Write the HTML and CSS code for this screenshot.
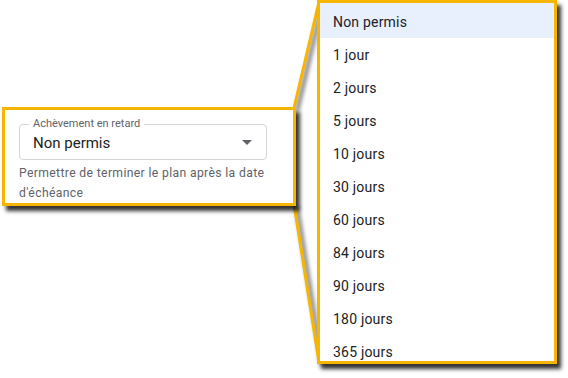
FILE: index.html
```html
<!DOCTYPE html>
<html lang="fr">

<head>
  <meta charset="UTF-8">
  <title>Achèvement en retard</title>
  <link rel="stylesheet" href="styles.css">
</head>

<body>
  <div class="canvas">
    <!-- traits de liaison entre la zone et le zoom -->
    <svg class="links" width="568" height="378" viewBox="0 0 568 378">
      <line x1="294" y1="108" x2="319" y2="2" />
      <line x1="294" y1="204" x2="319" y2="362" />
    </svg>

    <div class="callout field-box">
      <div class="select">
        <span class="select-label">Achèvement en retard</span>
        <span class="select-value">Non permis</span>
        <span class="select-arrow"></span>
      </div>
      <p class="helper">Permettre de terminer le plan après la date d'échéance</p>
    </div>

    <div class="callout menu-box">
      <ul class="menu">
        <li class="menu-item selected">Non permis</li>
        <li class="menu-item">1 jour</li>
        <li class="menu-item">2 jours</li>
        <li class="menu-item">5 jours</li>
        <li class="menu-item">10 jours</li>
        <li class="menu-item">30 jours</li>
        <li class="menu-item">60 jours</li>
        <li class="menu-item">84 jours</li>
        <li class="menu-item">90 jours</li>
        <li class="menu-item">180 jours</li>
        <li class="menu-item">365 jours</li>
      </ul>
    </div>
  </div>
</body>

</html>
```

FILE: styles.css
```css
* {
  margin: 0;
  padding: 0;
  box-sizing: border-box;
}

body {
  background: #fff;
  font-family: Roboto, "Liberation Sans", sans-serif;
  color: #202124;
}

.canvas {
  position: relative;
  width: 568px;
  height: 378px;
  overflow: hidden;
}

.links {
  position: absolute;
  left: 0;
  top: 0;
  filter: drop-shadow(3px 3px 2px rgba(0, 0, 0, 0.7));
}

.links line {
  stroke: #f6b500;
  stroke-width: 3;
}

/* les deux cadres jaunes */
.callout {
  position: absolute;
  background: #fff;
  border: 3px solid #f6b500;
  box-shadow: 4px 5px 4px rgba(0, 0, 0, 0.8);
  overflow: hidden;
}

.field-box {
  left: 2px;
  top: 107px;
  width: 294px;
  height: 99px;
  padding: 14px 0 0 14px;
}

.select {
  position: relative;
  width: 248px;
  height: 36px;
  border: 1px solid #d3d5d8;
  border-radius: 4px;
  display: flex;
  align-items: center;
  padding-left: 13px;
}

.select-label {
  position: absolute;
  left: 9px;
  top: -8px;
  padding: 0 4px;
  background: #fff;
  font-size: 11px;
  line-height: 14px;
  color: #5f6368;
}

.select-value {
  font-size: 15px;
  color: #202124;
  padding-top: 1px;
}

.select-arrow {
  position: absolute;
  right: 14px;
  top: 15px;
  border-left: 5px solid transparent;
  border-right: 5px solid transparent;
  border-top: 5px solid #5f6368;
}

.helper {
  margin-top: 3px;
  width: 272px;
  font-size: 12.2px;
  line-height: 20px;
  letter-spacing: 0.35px;
  color: #5f6368;
}

.menu-box {
  left: 317px;
  top: 0;
  width: 240px;
  height: 364px;
}

.menu {
  list-style: none;
}

.menu-item {
  height: 33px;
  display: flex;
  align-items: center;
  padding: 1px 0 0 13px;
  font-size: 14px;
  letter-spacing: 0.2px;
  color: #202124;
}

.menu-item.selected {
  height: 35px;
  padding-top: 2px;
  background: #e8f0fe;
}
```
